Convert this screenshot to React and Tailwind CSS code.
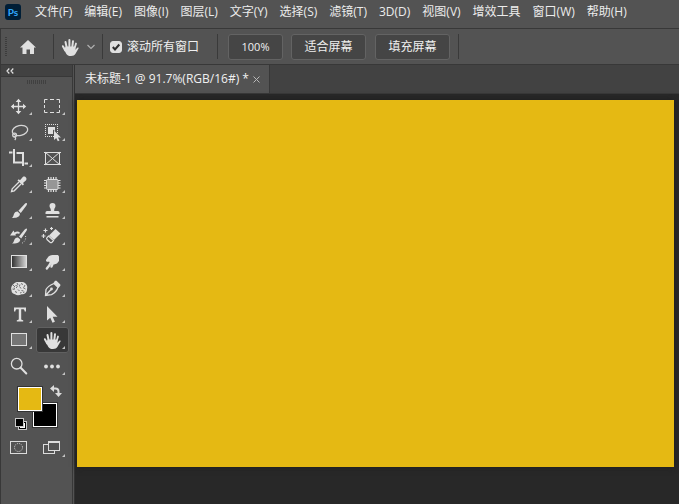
import { useState } from 'react';
import clsx from 'clsx';

const menus = [
  '文件(F)',
  '编辑(E)',
  '图像(I)',
  '图层(L)',
  '文字(Y)',
  '选择(S)',
  '滤镜(T)',
  '3D(D)',
  '视图(V)',
  '增效工具',
  '窗口(W)',
  '帮助(H)'
];

const HandShape = () => (
  <g>
    <path
      d="M12.800 14L11.500 8M15.400 13V6M18.300 13L19 7.200M11.300 16.500L8.900 12.200"
      fill="none"
      stroke="#e0e0e0"
      strokeWidth="2"
      strokeLinecap="round"
    />
    <path d="M20.500 14.500l1.500-5" fill="none" stroke="#e0e0e0" strokeWidth="1.800" strokeLinecap="round" />
    <path d="M11.600 12.500h9.700v3.200l2-1.900c.7-.7 1.700-.1 1.200.8l-3 5.200c-1 1.500-2.200 2.200-4.500 2.200-2.500 0-3.800-.6-4.800-2.300l-2-3.900z" fill="#e0e0e0" />
  </g>
);

// Each icon is drawn on a 33x26 cell
const tools = [
  {
    name: '移动工具',
    icon: (
      <g>
        <path d="M15.5 7v13M9 13.5h13" stroke="#e0e0e0" strokeWidth="1.3" />
        <path d="M15.5 5.8l2.8 3.2h-5.6zM15.5 21.2l2.8-3.2h-5.6zM7.8 13.5l3.2-2.8v5.6zM23.2 13.5L20 10.7v5.6z" fill="#e0e0e0" />
      </g>
    )
  },
  {
    name: '矩形选框工具',
    icon: (
      <path
        d="M8.5 10V6.5h3M14 6.5h4M20.5 6.5h3V10M23.5 12v3M23.5 17v2.5h-3M18 19.5h-4M11.5 19.5h-3V17M8.5 15v-3"
        fill="none"
        stroke="#e0e0e0"
      />
    )
  },
  {
    name: '套索工具',
    icon: (
      <g fill="none" stroke="#d6d6d6" strokeWidth="1.3">
        <ellipse cx="17" cy="11.5" rx="7.8" ry="5" transform="rotate(-12 17 11.5)" />
        <circle cx="11.6" cy="16" r="1.9" />
        <path d="M11 17.5c1.8.7 2.2 2.2.7 3.5" />
      </g>
    )
  },
  {
    name: '对象选择工具',
    icon: (
      <g>
        <path
          d="M9 5.500h13M9 17.500h9M9.500 7v10M21.500 7v8"
          fill="none"
          stroke="#e0e0e0"
          strokeDasharray="1 1"
        />
        <path d="M12 8h7v4l-2-1.500V15h-5z" fill="#e0e0e0" />
        <path d="M18 11.500v9.500l2.200-1.900 1.600 3.200 1.700-.8-1.600-3h3z" fill="#e0e0e0" />
      </g>
    )
  },
  {
    name: '裁剪工具',
    icon: (
      <path d="M6 7.500h3.500M11 4v13.500h9M21.500 18.500H25M13.500 8H20v13" fill="none" stroke="#e0e0e0" strokeWidth="2" />
    )
  },
  {
    name: '图框工具',
    noMenu: true,
    icon: (
      <g fill="none" stroke="#e0e0e0">
        <rect x="9.5" y="7.5" width="14" height="12" />
        <path d="M9 7l15 13M24 7L9 20" />
        <path d="M8 7.5h2M23 7.5h2M8 19.5h2M23 19.5h2" />
      </g>
    )
  },
  {
    name: '吸管工具',
    icon: (
      <g>
        <path d="M16 11l-6.800 6.800-.7 2.700 2.700-.7 6.800-6.800" fill="none" stroke="#e0e0e0" strokeWidth="1.3" />
        <path d="M14.500 9.500l1.200-1.200 1.300 1 2.800-3.300c1.800-1.500 4.800 1 3.300 3.300L20 12l1 1.300-1.200 1.200z" fill="#e0e0e0" />
      </g>
    )
  },
  {
    name: '修补工具',
    icon: (
      <g>
        <path
          d="M12.5 6v15M15 6v15M17.5 6v15M20 6v15M8 9.5h16.5M8 12h16.500M8 14.500h16.500M8 17h16.500"
          stroke="#e0e0e0"
          strokeWidth="1.2"
        />
        <rect x="10.500" y="8.500" width="11.500" height="10" rx="1" fill="#969696" stroke="#dcdcdc" />
      </g>
    )
  },
  {
    name: '画笔工具',
    icon: (
      <path d="M23.500 6c1 .6.400 1.800-.3 2.800l-5.400 7.200-2.400-2.200 6-6.600c.7-.8 1.500-1.500 2.100-1.200zM14.600 14.500l2.300 2.200c.2 3-3.300 4.600-8.200 4.100 1.800-1 1.700-2.300 2.500-4.200.7-1.500 2-2.300 3.400-2.100z" fill="#e0e0e0" />
    )
  },
  {
    name: '仿制图章工具',
    icon: (
      <g fill="#e0e0e0">
        <path d="M13.500 9a3 3 0 1 1 6 0c0 1.500-1.300 2.200-1.300 4v1H22q1.500 0 1.500 1.500V17h-14v-1.500Q9.500 14 11 14h3.800v-1c0-1.800-1.300-2.500-1.300-4z" />
        <rect x="10.500" y="19" width="12" height="1.500" />
      </g>
    )
  },
  {
    name: '历史记录画笔工具',
    icon: (
      <g>
        <path d="M23.500 5.500c1 .6.400 1.800-.3 2.800l-5 7.200-2.200-2 5.500-6.700c.7-.9 1.400-1.500 2-1.300zM15 14.500l2.200 2c0 3-3.500 4.400-8.200 4 1.800-1 1.700-2.200 2.500-4 .7-1.400 2-2.200 3.500-2z" fill="#e0e0e0" />
        <path d="M7 12.500l3.500-5 1 2c2-1.200 4-1.200 5.500.2l-1 1.300c-1.200-.7-2.500-.5-3.600.2l.6 1.300z" fill="#e0e0e0" />
        <path d="M22.500 13c.800 3-.8 6-4 7.500" fill="none" stroke="#d0d0d0" strokeDasharray="1 1.5" />
      </g>
    )
  },
  {
    name: '橡皮擦工具',
    icon: (
      <g>
        <path d="M19.5 6l5 4.5-6.500 6.500-5-4.500z" fill="#e0e0e0" />
        <path d="M12.500 13l5 4.500-1.500 1.700q-1 .8-2 0l-3-2.700q-.8-1 0-1.900z" fill="none" stroke="#e0e0e0" strokeWidth="1.2" />
        <path d="M9.500 5.500v4M7.500 7.500h4M15.500 4v3M14 5.500h3M7.500 11v4M5.500 13h4" stroke="#e0e0e0" strokeWidth="1.2" />
      </g>
    )
  },
  {
    name: '渐变工具',
    icon: (
      <g>
        <defs>
          <linearGradient id="gradient-tool">
            <stop offset="0" stopColor="#2c2c2c" />
            <stop offset="1" stopColor="#d8d8d8" />
          </linearGradient>
        </defs>
        <rect x="8.5" y="6.5" width="15" height="12" fill="url(#gradient-tool)" stroke="#e0e0e0" />
      </g>
    )
  },
  {
    name: '涂抹工具',
    icon: (
      <g>
        <path d="M12.500 7.500C14 6.300 16 6 18 6h4l1 1.500V12l-2 2.500-3 1-4-2.500-3.500-.8c-.8-.5-.6-1.300 0-2z" fill="#e0e0e0" />
        <path d="M15.500 12l-2.300 4.500-2.400 3M19 13l-2.200 1.600-1.300 3" fill="none" stroke="#e0e0e0" strokeWidth="2.300" strokeLinecap="round" />
        <path d="M11.300 11.800l3.200-1.800" stroke="#e0e0e0" strokeWidth="1.800" strokeLinecap="round" />
      </g>
    )
  },
  {
    name: '海绵工具',
    icon: (
      <g>
        <path d="M11 8.500c2-2 4-1.500 6-1.500 3-.3 5 .3 6 2 1.700 2 1.300 3.500 1 5.500 0 3-2.500 5-5.500 4.700-2 1.300-5 1.300-6.500 0-2-.2-3.500-1.500-3.500-3.700C7.500 13 8.500 10 11 8.500z" fill="#e0e0e0" />
        <path
          d="M10 10l2 2M14 8l1 2M18 8.500l2 1M22 10l-1 2M9.500 14l2 .5M13 13l1.500-1.500M16.500 11.500l1.500 2M20 12.500l2.500 1.500M12 16.500l2 1M15 14.500l1.500 1.500M18.500 15.500l2 .5M17 18l1.500-.5M12.500 10.500l2 .5M17 9.500l-.5 1.500M11 12.500l.5 1.500M20 17.500l1.500-.5"
          stroke="#707070"
        />
      </g>
    )
  },
  {
    name: '钢笔工具',
    icon: (
      <g>
        <path d="M9.500 20.500l.500-6c1.500-2.700 4.500-4.700 8-6l4 3.800c-1 3.200-3 5.700-6.500 7.400zM9.500 20.500l5.500-6" fill="none" stroke="#e0e0e0" strokeWidth="1.3" />
        <circle cx="15.500" cy="14" r="1.400" fill="#e0e0e0" />
        <path d="M17.500 8l1.500-2.200h1.500l3.800 3.700v1.300L22.500 13z" fill="#e0e0e0" />
      </g>
    )
  },
  {
    name: '文字工具',
    icon: (
      <path d="M11 6.500h12v4h-1.300c-.2-1.600-.7-2.200-2-2.200h-1.500v9.500c0 1 .5 1.300 2 1.400V20.500h-6.400v-1.300c1.500-.1 2-.4 2-1.400V8.300h-1.500c-1.300 0-1.800.6-2 2.200H11z" fill="#e0e0e0" />
    )
  },
  {
    name: '路径选择工具',
    icon: <path d="M11 5v14.500l3.300-2.700 2.200 5 2.400-1-2.200-5h4.800z" fill="#e0e0e0" />
  },
  {
    name: '矩形工具',
    icon: <rect x="8.5" y="6.5" width="15" height="12" fill="#757575" stroke="#e0e0e0" />
  },
  {
    name: '抓手工具',
    icon: <HandShape />
  },
  {
    name: '缩放工具',
    noMenu: true,
    icon: (
      <g fill="none" stroke="#e0e0e0">
        <circle cx="13.7" cy="10.7" r="5.3" strokeWidth="1.3" />
        <path d="M17.7 14.7l5.600 5.800" strokeWidth="2" strokeLinecap="round" />
      </g>
    )
  },
  {
    name: '编辑工具栏',
    icon: (
      <g fill="#e0e0e0">
        <circle cx="10" cy="13.5" r="1.9" />
        <circle cx="16" cy="13.5" r="1.9" />
        <circle cx="22" cy="13.5" r="1.9" />
      </g>
    )
  }
];

const Separator = () => <div className="h-[25px] w-px shrink-0 bg-[#3a3a3a]" />;

const OptionButton = ({ children, className }) => (
  <button
    type="button"
    className={clsx(
      'h-[26px] shrink-0 rounded-[3px] border border-[#636363] bg-[#454545] text-[#f0f0f0]',
      className
    )}
  >
    {children}
  </button>
);

const MenuBar = () => (
  <header className="flex h-[29px] items-start border-b border-[#383838] pl-[5px] pt-1">
    <div className="flex h-4 w-4 shrink-0 items-center justify-center rounded-[3px] bg-[#001e36] font-['Lato',sans-serif] text-[10px] font-bold leading-4 text-[#31a8ff]">
      Ps
    </div>
    <nav className="ml-[14px] flex gap-3 whitespace-nowrap">
      {menus.map(menu => (
        <button key={menu} type="button" className="h-4 leading-4 text-[#ececec]">
          {menu}
        </button>
      ))}
    </nav>
  </header>
);

const OptionsBar = () => {
  const [scrollAll, setScrollAll] = useState(true);

  return (
    <div className="flex h-9 items-center whitespace-nowrap border-b border-l border-[#383838] pl-1">
      <svg width="3" height="20" className="shrink-0">
        <path d="M1 0v20" stroke="#3c3c3c" strokeWidth="2" strokeDasharray="1 1" />
      </svg>
      <button type="button" aria-label="主页" className="ml-3">
        <svg width="17" height="16" viewBox="0 0 17 16">
          <path d="M8 1l8 7.500h-2V15h-4v-4.500H6.500V15h-4V8.500H0z" fill="#e0e0e0" />
        </svg>
      </button>
      <div className="ml-4 flex items-center">
        <Separator />
        <button type="button" aria-label="抓手工具预设" className="flex items-center">
          <svg width="33" height="26" viewBox="0 0 33 26">
            <HandShape />
          </svg>
          <svg width="8" height="6" viewBox="0 0 8 6">
            <path d="M.5 1L4 4.5 7.500 1" fill="none" stroke="#b0b0b0" strokeWidth="1.2" />
          </svg>
        </button>
      </div>
      <div className="ml-[7px] flex items-center">
        <Separator />
        <label className="ml-[7px] flex items-center gap-[5px] text-[#f0f0f0]">
          <span className="relative h-3 w-3">
            <input
              type="checkbox"
              checked={scrollAll}
              onChange={e => setScrollAll(e.target.checked)}
              className="block h-3 w-3 appearance-none rounded-[3px] border border-[#e0e0e0] checked:bg-[#e0e0e0]"
            />
            {scrollAll && (
              <svg viewBox="0 0 12 12" className="pointer-events-none absolute inset-0">
                <path d="M2.8 6l2.200 2.500L9.300 3.500" fill="none" stroke="#2e2e2e" strokeWidth="2" />
              </svg>
            )}
          </span>
          滚动所有窗口
        </label>
      </div>
      <div className="ml-[18px] flex items-center gap-2">
        <Separator />
        <OptionButton className="ml-[2px] w-[55px] text-[11px]">100%</OptionButton>
        <OptionButton className="w-[75px]">适合屏幕</OptionButton>
        <OptionButton className="ml-px w-[75px]">填充屏幕</OptionButton>
        <Separator />
      </div>
    </div>
  );
};

const ToolButton = ({ tool, active, onSelect }) => (
  <button
    type="button"
    aria-label={tool.name}
    aria-pressed={active}
    onClick={onSelect}
    className={clsx('h-[26px] w-[33px] rounded-[3px]', active && 'bg-[#383838] ring-1 ring-inset ring-[#606060]')}
  >
    <svg width="33" height="26" viewBox="0 0 33 26">
      {tool.icon}
      {!tool.noMenu && <path d="M29 19v3h-3z" fill="#c4c4c4" />}
    </svg>
  </button>
);

const Swatches = () => (
  <div className="relative mt-[6px] h-[46px]">
    <button
      type="button"
      aria-label="背景色"
      className="absolute left-[31px] top-[17px] h-[26px] w-[26px] border border-[#333333] bg-black ring-1 ring-inset ring-white"
    />
    <button
      type="button"
      aria-label="前景色"
      className="absolute left-4 top-px h-[26px] w-[26px] border border-[#333333] bg-[#e5b913] ring-1 ring-inset ring-white"
    />
    <button type="button" aria-label="切换前景色和背景色" className="absolute left-[49px] top-0">
      <svg width="12" height="12" viewBox="0 0 12 12">
        <path d="M3 3.500h2.500q3 0 3 3V8" fill="none" stroke="#dcdcdc" strokeWidth="2" />
        <path d="M0 3.500L4 0v7zM8.500 12L5 8h7z" fill="#dcdcdc" />
      </svg>
    </button>
    <button type="button" aria-label="默认前景色和背景色" className="absolute left-[14px] top-[33px]">
      <svg width="12" height="12" viewBox="0 0 12 12">
        <rect x="3.500" y="3.500" width="8" height="8" fill="#fff" stroke="#c8c8c8" />
        <rect x="4.500" y="4.500" width="6" height="6" fill="#fff" stroke="#000" />
        <rect x=".5" y=".5" width="8" height="8" fill="#000" stroke="#c8c8c8" />
      </svg>
    </button>
  </div>
);

const Toolbox = () => {
  const [active, setActive] = useState('抓手工具');

  return (
    <aside className="flex w-[73px] shrink-0 flex-col border-x border-[#383838]">
      <div className="flex h-3 items-center border-b border-[#383838] bg-[#424242] pl-[5px]">
        <svg width="8" height="6" viewBox="0 0 8 6">
          <path d="M3.300.5L1 3l2.300 2.500M7.300.5L5 3l2.300 2.500" fill="none" stroke="#e0e0e0" strokeWidth="1.2" />
        </svg>
      </div>
      <div className="flex h-4 justify-center pt-[3px]">
        <svg width="20" height="4">
          <path d="M0 2h20" stroke="#404040" strokeWidth="4" strokeDasharray="1 1" />
        </svg>
      </div>
      <div className="grid grid-cols-[33px_33px] pl-[2px]">
        {tools.map(tool => (
          <ToolButton
            key={tool.name}
            tool={tool}
            active={tool.name === active}
            onSelect={() => setActive(tool.name)}
          />
        ))}
      </div>
      <Swatches />
      <div className="mt-1 grid grid-cols-[33px_33px] pl-[2px]">
        <button type="button" aria-label="以快速蒙版模式编辑">
          <svg width="33" height="26" viewBox="0 0 33 26">
            <rect x="7.5" y="6.5" width="16" height="12" fill="none" stroke="#dcdcdc" />
            <circle cx="15.5" cy="12.5" r="4" fill="none" stroke="#dcdcdc" strokeDasharray="1 1.09" />
          </svg>
        </button>
        <button type="button" aria-label="更改屏幕模式">
          <svg width="33" height="26" viewBox="0 0 33 26">
            <rect x="7.5" y="9.5" width="11" height="9" fill="#535353" stroke="#dcdcdc" />
            <rect x="12.5" y="6.5" width="11" height="9" fill="#535353" stroke="#dcdcdc" />
            <path d="M12 7h12" stroke="#dcdcdc" strokeWidth="2" />
            <path d="M29 19v3h-3z" fill="#c4c4c4" />
          </svg>
        </button>
      </div>
    </aside>
  );
};

const Document = () => (
  <main className="ml-px flex min-w-0 flex-1 flex-col border-l border-[#333333]">
    <div className="flex h-[29px] shrink-0 border-b border-[#383838] bg-[#424242]">
      <div className="flex items-center gap-1 whitespace-nowrap border-r border-[#383838] bg-[#535353] pl-[10px] pr-[9px] text-[#f0f0f0]">
        <span>未标题-1 @ 91.7%(RGB/16#) *</span>
        <button type="button" aria-label="关闭">
          <svg width="7" height="7" viewBox="0 0 7 7">
            <path d="M.5.5l6 6M6.500.5l-6 6" stroke="#b8b8b8" />
          </svg>
        </button>
      </div>
    </div>
    <div className="flex flex-1 bg-[#282828] pb-[37px] pl-[2px] pr-[5px] pt-[6px]">
      <div className="flex-1 bg-[#e5b913] shadow-[0_0_6px_#1c1c1c]" />
    </div>
  </main>
);

const App = () => (
  <div className="flex min-h-screen flex-col bg-[#535353] font-['Open_Sans','Noto_Sans_CJK_SC',sans-serif] text-[12px] leading-4">
    <MenuBar />
    <OptionsBar />
    <div className="flex flex-1">
      <Toolbox />
      <Document />
    </div>
  </div>
);

export default App;
